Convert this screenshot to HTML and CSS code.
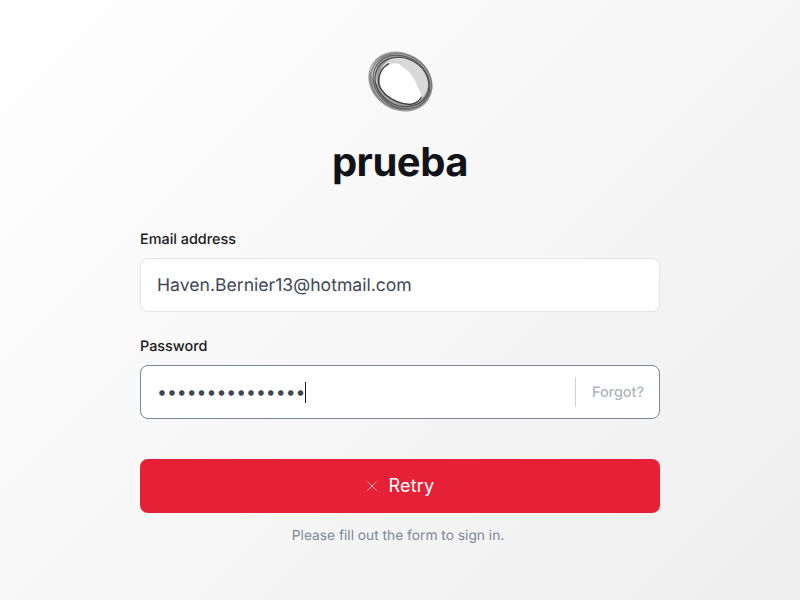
FILE: index.html
```html
<!DOCTYPE html>
<html lang="en">
<head>
<meta charset="utf-8">
<title>prueba</title>
<link rel="stylesheet" href="styles.css">
</head>
<body>
<main class="page">
  <form class="card">
    <svg class="logo" width="80" height="75" viewBox="0 0 80 75" aria-hidden="true">
      <defs><filter id="soft" x="-10%" y="-10%" width="120%" height="120%"><feGaussianBlur stdDeviation="0.5"/></filter></defs>
      <g filter="url(#soft)">
        <ellipse cx="40.500" cy="36.500" rx="33.500" ry="28.500" transform="rotate(32 40.500 36.500)" fill="#9c9c9c"/>
        <path d="M10 26C11 20 16 15 21 13C16 20 15 30 18 40C14 36 11 31 10 26Z" fill="#c2c2c2"/>
        <ellipse cx="44" cy="35" rx="25.500" ry="21.500" transform="rotate(38 44 35)" fill="#d8d8d8"/>
        <path d="M20 38C19 30 23 23 29 20C33 18 36 18 39 19C42 22 46 24 49 27C53 31 56 37 58 43C60 46 61 48 61 50C60 54 57 57 53 58C47 59 39 57 33 54C26 50 21 45 20 38Z" fill="#fff"/>
        <g fill="none">
          <path d="M18.500 38C18 30 22 22 29 18.500M61.500 52C59 56 55 59 50 59.500C42 60 32 55 26 50C22 46 19 42 18.500 38" stroke="#333" stroke-width="1.100"/>
          <ellipse cx="42" cy="37" rx="28" ry="23.500" transform="rotate(30 42 37)" stroke="#3d3d3d" stroke-width="1"/>
          <ellipse cx="41.500" cy="37" rx="30" ry="25" transform="rotate(36 41.500 37)" stroke="#565656" stroke-width="1"/>
          <ellipse cx="41" cy="36.500" rx="31.500" ry="27" transform="rotate(28 41 36.500)" stroke="#757575" stroke-width=".9"/>
        </g>
      </g>
    </svg>
    <h1 class="title">prueba</h1>
    <div class="field">
      <label class="label">Email address</label>
      <div class="control">
        <span class="value">Haven.Bernier13@hotmail.com</span>
      </div>
    </div>
    <div class="field field-password">
      <label class="label">Password</label>
      <div class="control control-focus">
        <span class="value">•••••••••••••••</span><span class="caret"></span>
        <span class="forgot">Forgot?</span>
      </div>
    </div>
    <button class="retry" type="button">
      <svg class="retry-icon" width="12" height="12" viewBox="0 0 12 12" aria-hidden="true"><path d="M1.500 1.500L10.500 10.500M10.500 1.500L1.500 10.500" stroke="#f7a8b3" stroke-width="1"/></svg>
      <span>Retry</span>
    </button>
    <p class="hint">Please fill out the form to sign in.</p>
  </form>
</main>
</body>
</html>
```
FILE: styles.css
```css
* { box-sizing: border-box; }
html, body { margin: 0; height: 100%; }
body {
  font-family: Inter, "Liberation Sans", sans-serif;
  background: linear-gradient(135deg, #ffffff, #eeeeee);
  color: #18181b;
  text-rendering: geometricPrecision;
}
.page { display: flex; justify-content: center; height: 600px; overflow: hidden; }
.card { width: 520px; display: flex; flex-direction: column; align-items: stretch; padding-top: 45px; }
.logo { align-self: center; display: block; }
.title {
  margin: 17px 0 0;
  font-size: 40px;
  line-height: 50px;
  font-weight: 700;
  letter-spacing: -0.47px;
  text-align: center;
  color: #111318;
}
.field { margin-top: 41.6px; display: flex; flex-direction: column; }
.field-password { margin-top: 24px; }
.label { font-size: 14.4px; line-height: 21px; font-weight: 500; color: #18181b; margin-bottom: 8.6px; }
.control {
  height: 53.6px;
  display: flex;
  align-items: center;
  padding: 0 16px;
  background: #fff;
  border: 1px solid #e4e4e7;
  border-radius: 8px;
}
.control-focus { border-color: #7b8798; }
.value { font-size: 17.6px; padding-top: 1px; color: #3f4754; }
.caret { width: 1px; height: 21px; background: #18181b; }
.forgot {
  margin-left: auto;
  margin-right: -1px;
  align-self: center;
  height: 30px;
  line-height: 32px;
  padding-left: 16px;
  border-left: 1px solid #d4d4d8;
  font-size: 14.4px;
  font-weight: 500;
  color: #adb5bd;
}
.retry {
  margin-top: 40px;
  height: 54px;
  border: 0;
  border-radius: 8px;
  background: #e62036;
  color: #fff;
  font: 400 18px Inter, "Liberation Sans", sans-serif;
  letter-spacing: 0.2px;
  display: flex;
  align-items: center;
  justify-content: center;
  gap: 11px;
}
.hint { margin: 13px 0 0; padding-right: 4px; text-align: center; font-size: 13.76px; line-height: 20px; color: #7b8798; }
```
